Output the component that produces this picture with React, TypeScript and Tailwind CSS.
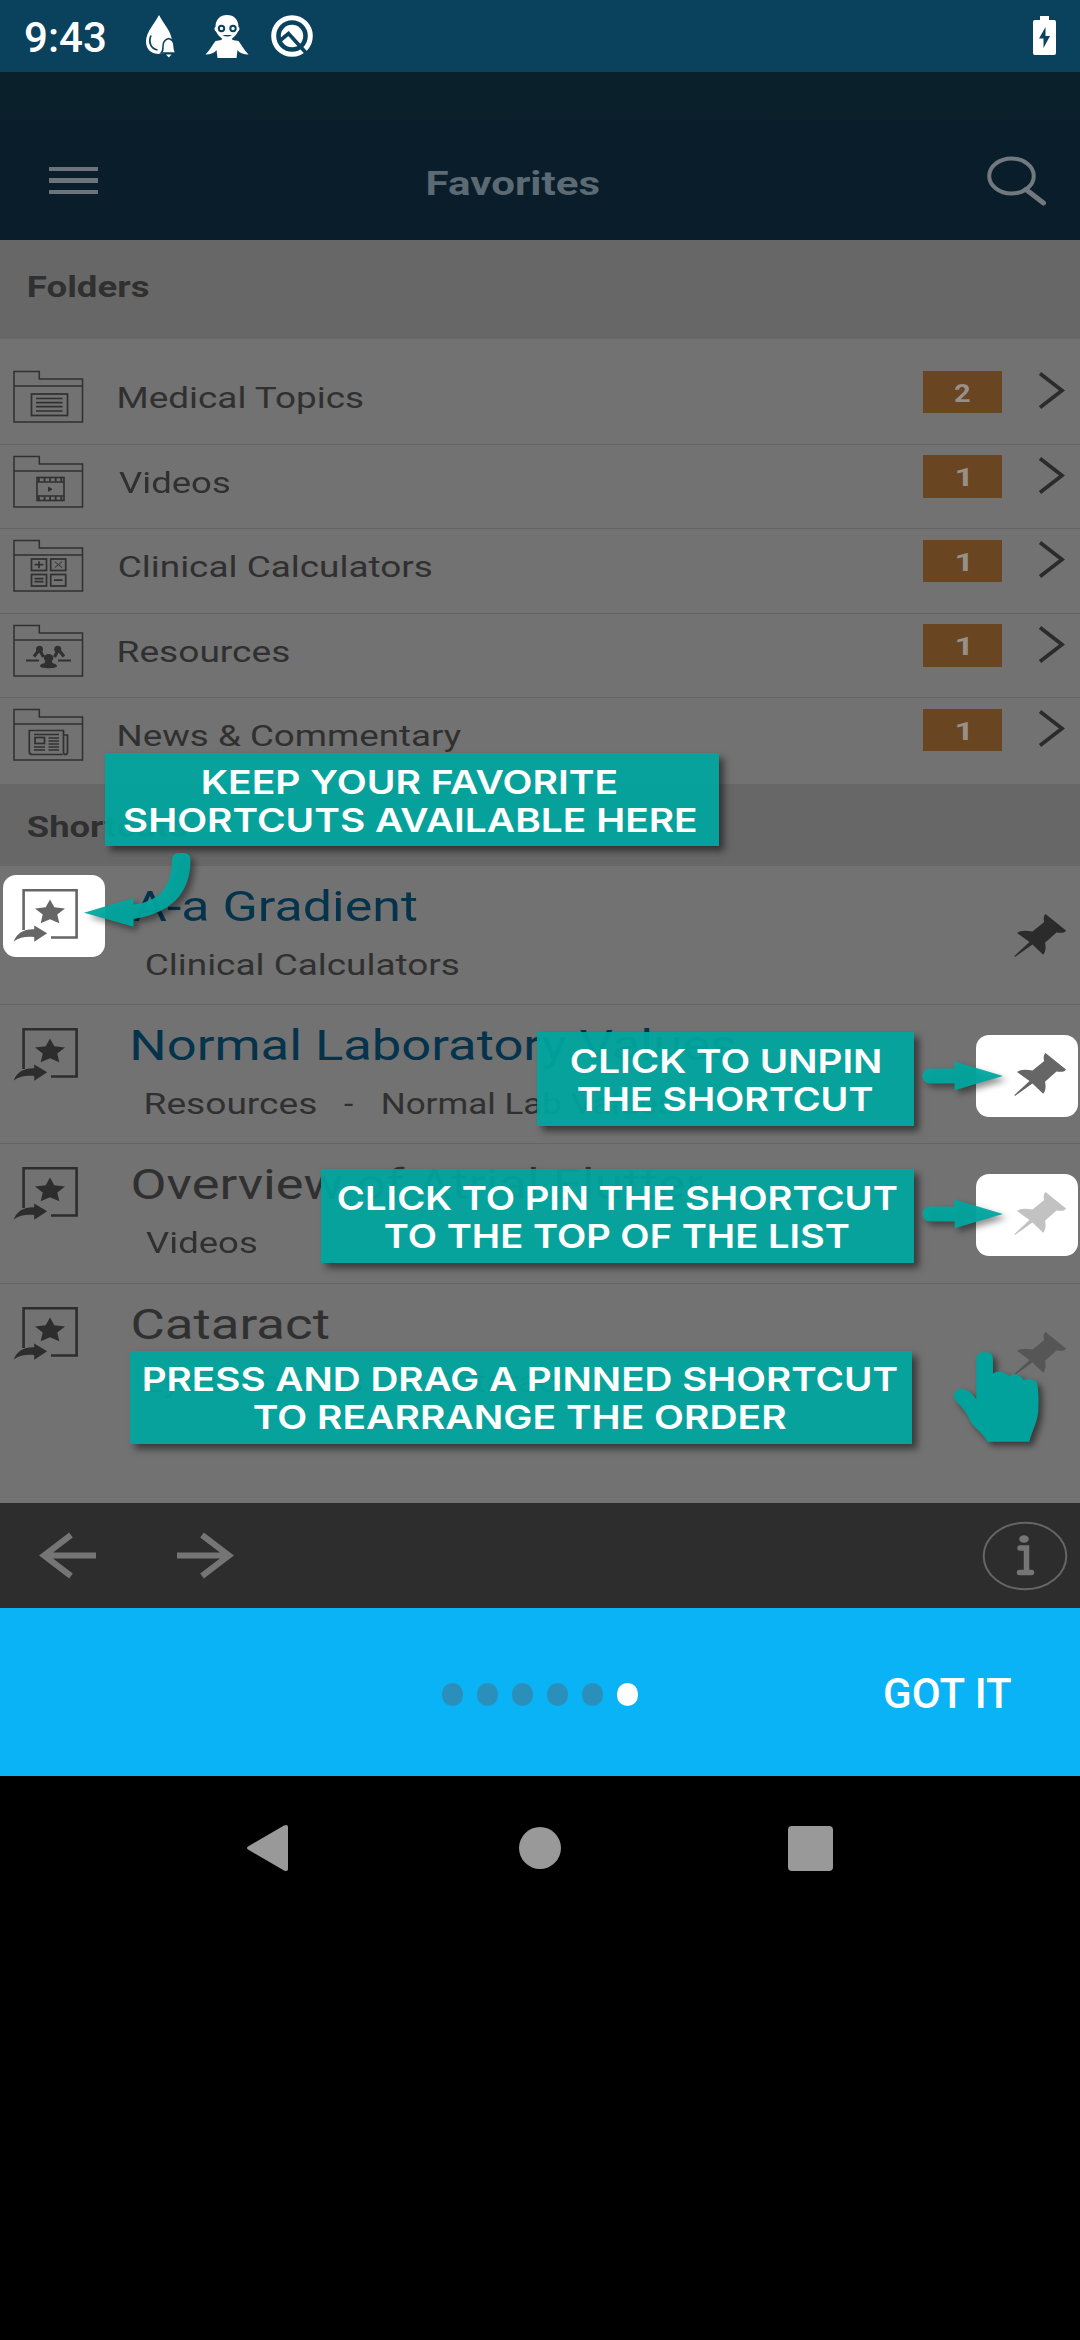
import { useLayoutEffect, useRef, useState } from "react";
import type { ReactNode } from "react";

/* One line of text whose visible glyphs are stretched to span exactly `w` pixels. */
function Fit({ w, className = "", children }: { w: number; className?: string; children: string }) {
  const ref = useRef<HTMLSpanElement>(null);
  const [t, setT] = useState("none");
  useLayoutEffect(() => {
    const el = ref.current;
    const ctx = document.createElement("canvas").getContext("2d");
    if (!el || !ctx) return;
    const cs = getComputedStyle(el);
    ctx.font = `${cs.fontWeight} ${cs.fontSize} ${cs.fontFamily}`;
    const m = ctx.measureText(children);
    const s = w / (m.actualBoundingBoxRight + m.actualBoundingBoxLeft);
    setT(`translateX(${m.actualBoundingBoxLeft * s}px) scaleX(${s})`);
  }, [children, w]);
  return (
    <div className={`shrink-0 whitespace-nowrap ${className}`} style={{ width: w }}>
      <span ref={ref} className="inline-block origin-left" style={{ transform: t }}>
        {children}
      </span>
    </div>
  );
}

function FolderIcon({ children }: { children: ReactNode }) {
  return (
    <svg width="72" height="54" viewBox="0 0 72 54" fill="none" stroke="#303030" strokeWidth="1.5" className="shrink-0">
      <path d="M2 52V1.5h25.3V9H70.500v43z" />
      <path d="M2 16h68.500" />
      {children}
    </svg>
  );
}

const glyphs = {
  topics: (
    <g strokeWidth="1.7">
      <rect x="19.500" y="24" width="36" height="21.500" />
      <path d="M24 28.500h26.500M24 32.700h26.500M24 36.700h26.500M24 41h26.500" />
    </g>
  ),
  videos: (
    <g strokeWidth="1.6">
      <rect x="25" y="22.500" width="27" height="23" />
      <path d="M25 27h27M25 41h27" />
      <path d="M26 24.700h25M26 43.300h25" strokeWidth="3.500" strokeDasharray="1.800 3.800" />
      <path d="M36.500 32.200l3.500 2-3.500 2z" fill="#303030" stroke="#303030" strokeWidth="1" />
    </g>
  ),
  calc: (
    <g strokeWidth="1.700">
      <rect x="19.500" y="20" width="15" height="11.500" />
      <rect x="38.700" y="20" width="15" height="11.500" />
      <rect x="19.500" y="35.500" width="15" height="11.500" />
      <rect x="38.700" y="35.500" width="15" height="11.500" />
      <path d="M22.500 25.700h9M27 22.300v7M22.500 39.700h9M22.500 42.700h9M42 41.200h8.500" />
      <path d="M42.700 22.700l7.500 6M50.200 22.700l-7.500 6" strokeWidth="1" />
    </g>
  ),
  people: (
    <g>
      <path d="M14 36.500h13M46 36.500h13" strokeWidth="1.800" />
      <path d="M22 32.500l4-5M31.500 33l-3-5.500M42.500 33l3-5.500M52 32.500l-4-5" strokeWidth="3.200" />
      <g fill="#303030" stroke="none">
        <circle cx="27.500" cy="25.200" r="3.500" />
        <circle cx="45.700" cy="25.200" r="3.500" />
        <ellipse cx="36.600" cy="34" rx="4.800" ry="4" />
        <path d="M33.500 36h6.200l.8 3c3 .8 4.500 1.800 4.500 3.200 0 1-3.800 2-8.400 2s-8.600-1-8.600-2c0-1.400 1.500-2.400 4.700-3.200z" />
      </g>
    </g>
  ),
  news: (
    <g strokeWidth="1.700">
      <path d="M50.700 46.500H20.500q-3.200 0-3.200-2.500V22.500h34.200V44q0 2.500 2 2.500t2-2.500V27H52" />
      <rect x="23" y="29.500" width="9.500" height="6" />
      <path d="M22 26.500h25M36.500 30h10.500M36.500 33h10.500M36.500 36h10.500M22 39h11M36.500 39h10.500M22 42h11M36.500 42h10.500" strokeWidth="1.300" />
    </g>
  ),
};

const folders = [
  { label: "Medical Topics", w: 244, n: "2", icon: glyphs.topics },
  { label: "Videos", w: 110, n: "1", icon: glyphs.videos },
  { label: "Clinical Calculators", w: 312, n: "1", icon: glyphs.calc },
  { label: "Resources", w: 169.500, n: "1", icon: glyphs.people },
  { label: "News & Commentary", w: 342, n: "1", icon: glyphs.news },
];

function ShortcutIcon({ color }: { color: string }) {
  return (
    <svg width="102" height="82" viewBox="0 0 102 82" fill="none" className="block">
      <path d="M20.600 55V15.200H73.600V62.500H48" stroke={color} strokeWidth="2.600" />
      <path
        d="M47 24.500l4.300 7.700 10.700 1.200-7.700 6.100 2 8.700L47 44.200l-9.300 4 2-8.700-7.700-6.100 10.700-1.200z"
        fill={color}
      />
      <path d="M10.700 66.500c3.500-8.500 10-12.500 20.500-12.200V50.500l13 7.800-13 8.500V62c-8-.8-14.500.3-20.500 4.500z" fill={color} />
    </svg>
  );
}

function Pin({ color }: { color: string }) {
  return (
    <svg width="102" height="82" viewBox="0 0 102 82" className="block">
      <path
        d="M69.500 18L90 34.500c-.8 2.500-5 2.800-9.500 1.900L69 46.800c1 4.500.8 8.700-1.800 12L56.400 48.600 39 61l-.6-1L53.500 46 41 37c3.500-3 9.500-2.700 15.500-1.500L68.200 26c-1-3-.7-6 1.300-8z"
        fill={color}
      />
    </svg>
  );
}

const Sub = ({ w, children }: { w: number; children: string }) => (
  <Fit w={w} className="text-[30px] leading-[40px] text-[#303030]">
    {children}
  </Fit>
);

const shortcuts = [
  { title: "A-a Gradient", w: 284, tone: "text-[#04334b]", sub: [["Clinical Calculators", 312]], pin: "#2b2b2b", iconLit: true, pinLit: false },
  { title: "Normal Laboratory Values", w: 602, tone: "text-[#04334b]", sub: [["Resources", 169.500], ["Normal Lab Values", 291]], pin: "#666666", iconLit: false, pinLit: true },
  { title: "Overview of Atrial Flutter", w: 570, tone: "text-[#303030]", sub: [["Videos", 110]], pin: "#c2c2c2", iconLit: false, pinLit: true },
  { title: "Cataract", w: 196, tone: "text-[#303030]", sub: [["Eye Disorders", 216], ["Cataract", 139]], pin: "#565656", iconLit: false, pinLit: false },
] as { title: string; w: number; tone: string; sub: [string, number][]; pin: string; iconLit: boolean; pinLit: boolean }[];

function Callout({ className, lines }: { className: string; lines: [string, number][] }) {
  return (
    <div
      className={`absolute flex flex-col items-center bg-[#00a69f]/93 pt-[9.500px] font-['Inter'] text-[33px] leading-[38px] font-semibold text-white shadow-[5px_5px_7px_rgba(0,0,0,0.5)] ${className}`}
    >
      {lines.map(([t, w]) => (
        <Fit key={t} w={w}>
          {t}
        </Fit>
      ))}
    </div>
  );
}

function StraightArrow({ className }: { className: string }) {
  return (
    <svg width="92" height="40" viewBox="0 0 92 40" className={`absolute left-[920px] drop-shadow-[4px_4px_3px_rgba(0,0,0,0.45)] ${className}`}>
      <path d="M10 12.500H34.600V5.500L83 20 34.600 34.300V27.500H10a7.500 7.500 0 0 1 0-15z" fill="#00a69f" fillOpacity=".94" />
    </svg>
  );
}

export default function App() {
  return (
    <div className="relative flex h-[2340px] w-[1080px] flex-col overflow-hidden bg-black font-['Roboto',sans-serif]">
      {/* Status bar */}
      <div className="flex h-[72px] shrink-0 items-center bg-[#0a425e] pr-6 pl-[25px] text-white">
        <Fit w={80} className="pt-[3px] text-[42px] leading-[46px] font-medium">
          9:43
        </Fit>
        <svg width="32" height="44" viewBox="0 0 32 44" className="ml-[40px]">
          <path d="M14 1C10 9 1 18 1 27.500 1 36 7 40 14 40c7.500 0 13-4 13-12.500C27 18 18 9 14 1z" fill="#fff" />
          <path d="M6 21.500c-3 7 0 13 6.500 14.500" stroke="#0a425e" strokeWidth="1.700" fill="none" />
          <path d="M16 39c2-2 2-3 2-7 0-4.500 2-6.500 5.500-7.500 4 1 5.500 3 5.500 7.500 0 4 .5 5 2 7z" fill="#fff" stroke="#0a425e" strokeWidth="1.500" />
          <path d="M21 40.500h5.500l-2.700 3z" fill="#fff" />
        </svg>
        <svg width="44" height="44" viewBox="0 0 44 44" className="ml-[28px]">
          <path d="M22 1c7 0 11.500 4.500 11.500 12 1.500.5 1.300 3.500-.5 4.500-1.500 3.500-4 5.500-6 7l.5 1.500 6 1c3 3.500 5.500 9 10 13.500-4 0-8.500-1-11-4.500l-1 8h-19l-1-8c-2.500 3.500-7 4.500-11 4.500 4.500-4.500 7-10 10-13.500l6-1 .5-1.500c-2-1.500-4.500-3.500-6-7-1.800-1-2-4-.5-4.500C10.500 5.500 15 1 22 1z" fill="#fff" />
          <circle cx="16.500" cy="14.500" r="2.700" fill="none" stroke="#0a425e" strokeWidth="2" />
          <circle cx="28" cy="14.500" r="2.700" fill="none" stroke="#0a425e" strokeWidth="2" />
          <path d="M17.500 21h9.500q-4.700 3-9.500 0z" fill="#0a425e" />
        </svg>
        <svg width="44" height="44" viewBox="0 0 44 44" className="ml-[21px]">
          <circle cx="22" cy="22" r="18.300" fill="none" stroke="#fff" strokeWidth="5" />
          <circle cx="22" cy="22" r="11.200" fill="#fff" />
          <path d="M9.500 27L18.500 19.500 38 41" fill="none" stroke="#0a425e" strokeWidth="3.600" />
        </svg>
        <svg width="23" height="40" viewBox="0 0 23 40" className="ml-auto">
          <path d="M7 0h9v4h5q2 0 2 2v31q0 2-2 2H2q-2 0-2-2V6q0-2 2-2h5z" fill="#fff" />
          <path d="M12.500 11v9h4.500L10.500 32v-9.500H6z" fill="#0a425e" />
        </svg>
      </div>

      {/* Dimmed application header */}
      <div className="flex h-[168px] shrink-0 items-start bg-linear-to-b from-[#0a202a] from-28% to-[#0a1d2a] to-30% pl-[49px]">
        <div className="mt-[94.500px] flex w-[49px] flex-col gap-[7px]">
          <div className="h-[4.500px] bg-[#6c737a]" />
          <div className="h-[4.500px] bg-[#6c737a]" />
          <div className="h-[4.500px] bg-[#6c737a]" />
        </div>
        <Fit w={171.500} className="mt-[91px] ml-[330px] text-[34px] leading-[40px] font-bold text-[#5b6a73]">
          Favorites
        </Fit>
        <svg width="62" height="50" viewBox="0 0 62 50" className="mt-[84px] ml-[386px]" fill="none" stroke="#72797e">
          <ellipse cx="25.500" cy="20" rx="22.300" ry="17.500" strokeWidth="4" />
          <path d="M40 33.500L57.500 47" strokeWidth="5" strokeLinecap="round" />
        </svg>
      </div>

      {/* Folders */}
      <div className="flex h-[99px] shrink-0 bg-[#676767] pt-[27px] pl-[27.500px]">
        <Fit w={121} className="text-[30px] leading-[40px] font-bold text-[#303030]">
          Folders
        </Fit>
      </div>
      <div className="h-[445px] shrink-0 bg-[#727272] pt-[21px]">
        {folders.map((f, i) => (
          <div
            key={f.label}
            className={`flex h-[84.500px] items-start pl-3 ${i < 4 ? "border-b-[1.500px] border-[#646464]" : ""}`}
          >
            <div className="pt-[10px]">
              <FolderIcon>{f.icon}</FolderIcon>
            </div>
            <Fit w={f.w} className="mt-[18px] ml-[35px] text-[30px] leading-[40px] text-[#303030]">
              {f.label}
            </Fit>
            <div className="mt-[10.500px] ml-auto flex h-[42.500px] w-[79px] items-center justify-center bg-[#6a4522]">
              <Fit w={f.n === "2" ? 16.500 : 11.500} className="pt-[2px] text-[26.500px] leading-[40px] font-bold text-[#979089]">
                {f.n}
              </Fit>
            </div>
            <svg width="30" height="42" viewBox="0 0 30 42" className="mt-[10px] mr-[13px] ml-[35px]">
              <path d="M3 3.500l22 17L3 37.500" fill="none" stroke="#2b2b2b" strokeWidth="3.700" />
            </svg>
          </div>
        ))}
      </div>

      {/* Shortcuts */}
      <div className="flex h-[82px] shrink-0 bg-[#676767] pt-[22.500px] pl-[27.500px]">
        <Fit w={158.500} className="text-[30px] leading-[40px] font-bold text-[#303030]">
          Shortcuts
        </Fit>
      </div>
      <div className="h-[637px] shrink-0 bg-[#727272]">
        {shortcuts.map((s, i) => (
          <div
            key={s.title}
            className={`flex h-[139.200px] items-start pl-[3px] ${i < 3 ? "border-b-[1.500px] border-[#646464]" : ""}`}
          >
            <div className={`mt-[9px] rounded-[13px] ${s.iconLit ? "bg-white" : ""}`}>
              <ShortcutIcon color={s.iconLit ? "#666666" : "#2d2d2d"} />
            </div>
            <div className="mt-4 ml-[28px] flex flex-col">
              <Fit w={s.w} className={`text-[42px] leading-[50px] ${s.tone}`}>
                {s.title}
              </Fit>
              <div className="mt-[12.500px] flex pl-[12.500px]">
                <Sub w={s.sub[0][1]}>{s.sub[0][0]}</Sub>
                {s.sub[1] && (
                  <>
                    <div className="w-[29px]" />
                    <Sub w={9}>-</Sub>
                    <div className="w-[30px]" />
                    <Sub w={s.sub[1][1]}>{s.sub[1][0]}</Sub>
                  </>
                )}
              </div>
            </div>
            <div className={`mt-[30px] mr-[2px] ml-auto rounded-[13px] ${s.pinLit ? "bg-white" : ""}`}>
              <Pin color={s.pin} />
            </div>
          </div>
        ))}
      </div>

      {/* Toolbar */}
      <div className="flex h-[105px] shrink-0 items-center bg-[#2d2d2d] pl-[38px]">
        <svg width="60" height="48" viewBox="0 0 60 48" fill="none" stroke="#757575" strokeWidth="6">
          <path d="M58 23.500H6M33 3L6 23.500l27 20.500" />
        </svg>
        <svg width="60" height="48" viewBox="0 0 60 48" fill="none" stroke="#757575" strokeWidth="6" className="ml-[77px]">
          <path d="M2 23.500h52M27 3l27 20.500-27 20.500" />
        </svg>
        <svg width="86" height="70" viewBox="0 0 86 70" className="mr-[12px] ml-auto">
          <ellipse cx="43" cy="35" rx="41.300" ry="33.300" fill="none" stroke="#666" strokeWidth="2" />
          <ellipse cx="42" cy="18" rx="4.800" ry="3.800" fill="#757575" />
          <path d="M38 27h6.500v24M37.500 51.500h12" fill="none" stroke="#757575" strokeWidth="5.500" strokeLinecap="round" />
        </svg>
      </div>

      {/* Pager */}
      <div className="flex h-[168px] shrink-0 items-center bg-[#0ab3f5] pl-[442px]">
        <div className="flex gap-[14px] pt-[5px]">
          {[0, 1, 2, 3, 4].map((i) => (
            <div key={i} className="h-[23px] w-[21px] rounded-full bg-[#2a90bb]" />
          ))}
          <div className="h-[23px] w-[21px] rounded-full bg-white" />
        </div>
        <Fit w={127} className="mt-[3px] ml-[247px] text-[42px] leading-[50px] font-medium text-white">
          GOT IT
        </Fit>
      </div>

      {/* System navigation */}
      <div className="flex h-[144px] shrink-0 items-center bg-black pl-[246px]">
        <svg width="42" height="50" viewBox="0 0 42 50">
          <path d="M38 2.500L2 23.500q-2 1.500 0 3L38 47.500q4 1.500 4-1.500V4q0-3-4-1.500z" fill="#999" />
        </svg>
        <div className="ml-[231px] size-[42px] rounded-full bg-[#999]" />
        <div className="ml-[227px] size-[45px] rounded-[4px] bg-[#999]" />
      </div>

      {/* Coach marks laid over the page */}
      <Callout className="top-[753px] left-[105px] h-[93px] w-[614px] pr-[4px]" lines={[["KEEP YOUR FAVORITE", 414], ["SHORTCUTS AVAILABLE HERE", 572.500]]} />
      <Callout className="top-[1032px] left-[537px] h-[93.500px] w-[376.500px]" lines={[["CLICK TO UNPIN", 309], ["THE SHORTCUT", 294.500]]} />
      <Callout className="top-[1169px] left-[321px] h-[93.500px] w-[592.500px]" lines={[["CLICK TO PIN THE SHORTCUT", 559], ["TO THE TOP OF THE LIST", 464]]} />
      <Callout className="top-[1350.500px] left-[130px] h-[93.500px] w-[782px] pr-[2px]" lines={[["PRESS AND DRAG A PINNED SHORTCUT", 753], ["TO REARRANGE THE ORDER", 532]]} />

      <svg width="120" height="90" viewBox="0 0 120 90" className="absolute top-[848px] left-[80px] drop-shadow-[4px_4px_3px_rgba(0,0,0,0.45)]">
        <path
          d="M92 12q0-7 7-7h4q7.500 0 7.500 7c0 25-11 52-57 59V78.700L4 64.700 53.500 50V56.500C80 54 92 37 92 12z"
          fill="#00a69f"
          fillOpacity=".94"
        />
      </svg>
      <StraightArrow className="top-[1056px]" />
      <StraightArrow className="top-[1193.500px]" />
      <svg width="96" height="100" viewBox="0 0 96 100" className="absolute top-[1348px] left-[950px] drop-shadow-[4px_4px_3px_rgba(0,0,0,0.5)]">
        <path
          d="M26.300 12q0-8 8.500-8T43 12V25.500q6-3.500 11-.5 4 1.500 5 3 5-3 10-.500 4 2 4.500 4.500 5-1.500 10 0 4 1 4 5.500c1.500 9 1 17 .8 25-.8 12-5.500 18-9 31.200H37.300C33 84 22 80 18.300 68.700 14 61 11 59 4.500 51 2 44 8 40 14 41.200c6 1.500 8.500 5 12.300 10z"
          fill="#00a29b"
        />
      </svg>
    </div>
  );
}
